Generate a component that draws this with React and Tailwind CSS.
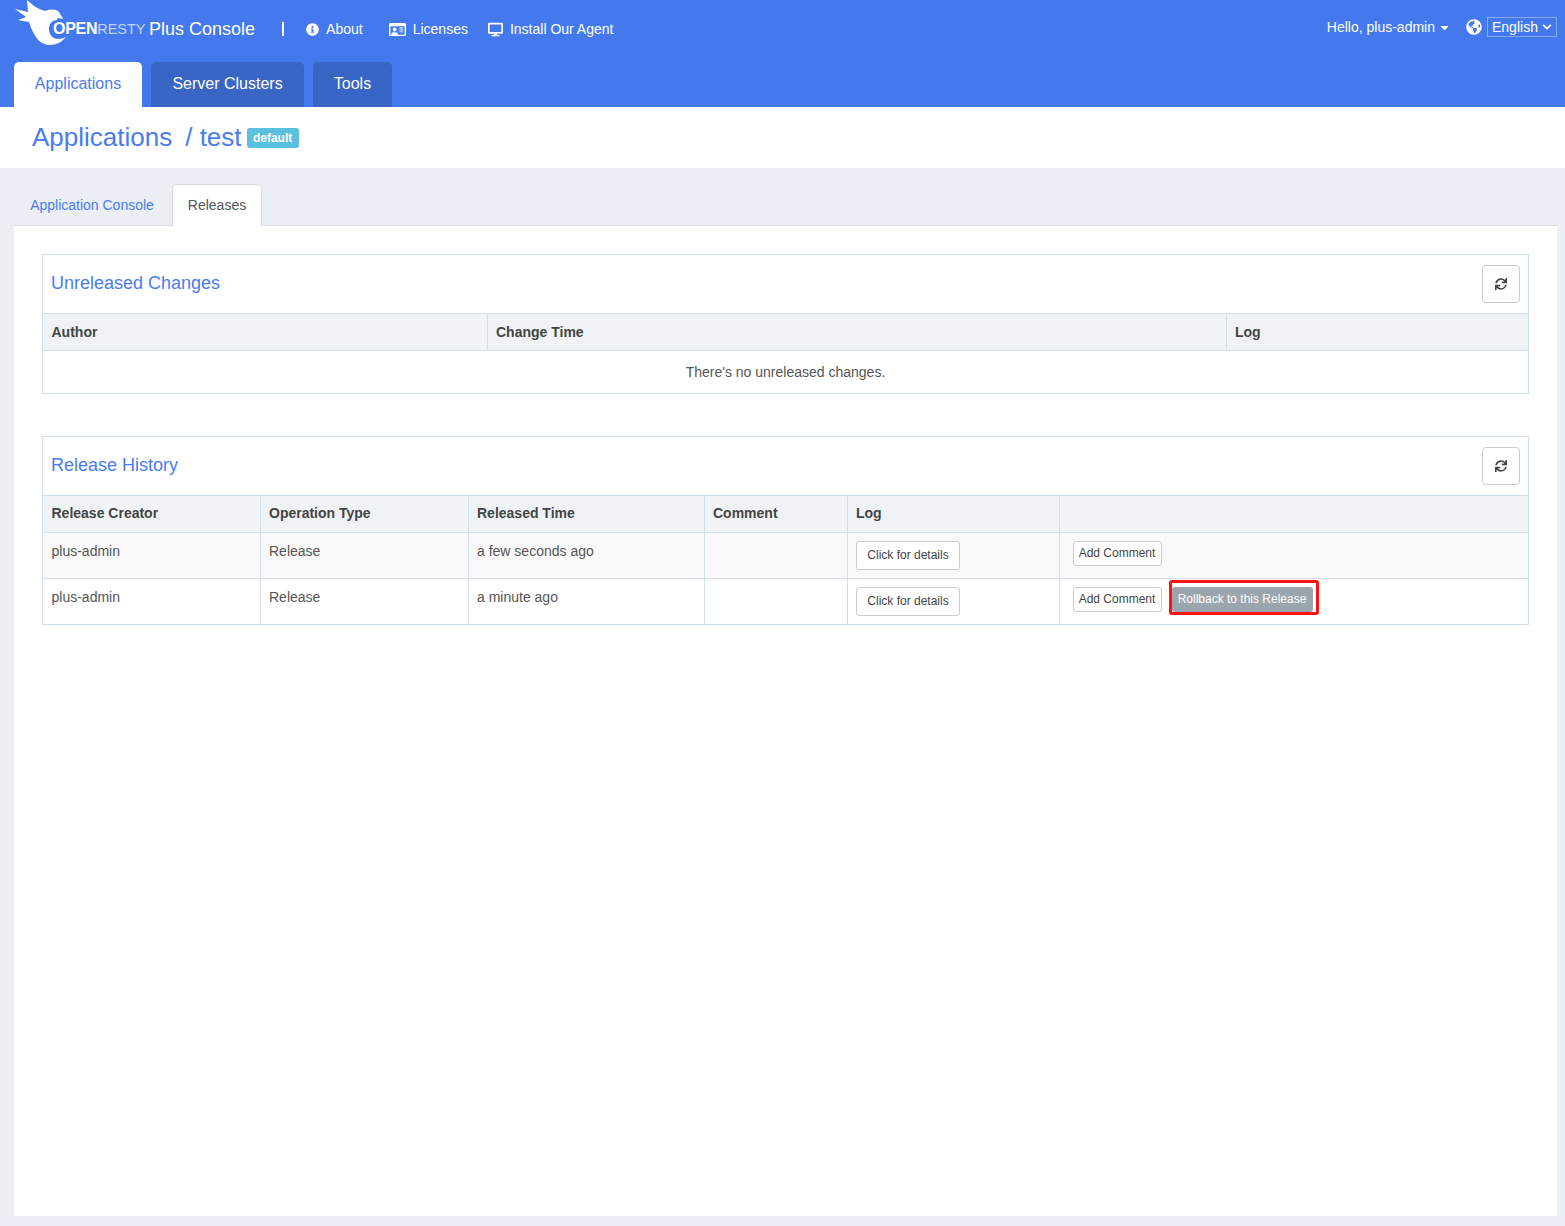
import React from "react";
import { FaInfoCircle, FaRegIdCard, FaDesktop, FaGlobeAmericas, FaSync, FaCaretDown, FaChevronDown } from "react-icons/fa";

const Logo = () => (
  <div className="relative w-[145px] h-[50px] -ml-[14px] shrink-0">
    <svg width="70" height="50" viewBox="0 0 70 50" className="absolute left-0 top-0">
      <path fill="#fff" d="M27 0 C32 5 38 9 45 11 C50 9 56 9 59 12 C60 14 62 16 63 19 L58 18 C57 19 57 20 57 20 C52 20 49 24 49 29 C49 35 53 39 58 39 C61 39 64 38 66 37 C62 42 56 45 50 45 C42 45 37 40 33 32 C31 28 30 25 29 22 L18 20 L26 17 L15 9 L28 12 Z" />
    </svg>
    <span className="absolute left-[53px] top-[18px] text-[16px] leading-[22px] font-bold text-white tracking-[-0.3px] whitespace-nowrap">OPEN<span className="font-normal text-[14.5px] text-[#c3d4f9] tracking-[0px]">RESTY</span></span>
  </div>
);

const NavLink = ({ icon, label, className }) => (
  <a className={`flex items-center text-white text-[14px] whitespace-nowrap ${className}`}>
    {icon}
    {label}
  </a>
);

const Th = ({ children, className = "" }) => (
  <th className={`border border-[#d1dfea] bg-[#f0f3f6] pl-[8.5px] pr-2 h-[37px] text-left text-[14px] font-bold text-[#444] ${className}`}>{children}</th>
);

const Td = ({ children, className = "" }) => (
  <td className={`border border-[#d1dfea] pl-[8.5px] pr-2 pt-[2px] h-[46px] align-top text-[14px] text-[#555] ${className}`}>{children}</td>
);

const SmallBtn = ({ children, className = "" }) => (
  <button className={`bg-white border border-[#ccc] rounded-[3px] text-[12px] text-[#444] ${className}`}>{children}</button>
);

const PanelHead = ({ title }) => (
  <div className="h-[59px] flex items-center justify-between pl-2 pr-2 border-b border-[#d1dfea]">
    <h3 className="text-[18px] font-normal text-[#4a7cf0] -mt-[1px]">{title}</h3>
    <button className="w-[38px] h-[38px] bg-white border border-[#ccc] rounded-[4px] flex items-center justify-center text-[#444]">
      <FaSync className="text-[12px]" />
    </button>
  </div>
);

const HistoryRow = ({ time, rollback, striped }) => (
  <tr className={striped ? "bg-[#f9f9f9]" : "bg-white"}>
    <Td>
      <div className="pt-[6px] leading-[20px]">plus-admin</div>
    </Td>
    <Td>
      <div className="pt-[6px] leading-[20px]">Release</div>
    </Td>
    <Td>
      <div className="pt-[6px] leading-[20px]">{time}</div>
    </Td>
    <Td></Td>
    <Td>
      <SmallBtn className="mt-[6px] w-[104px] h-[29px] block -ml-[0.5px] pl-[1px]">Click for details</SmallBtn>
    </Td>
    <td className="border border-[#d1dfea] pl-[13px] align-top">
      <div className="flex items-start">
        <SmallBtn className="mt-[8px] w-[89px] h-[25px]">Add Comment</SmallBtn>
        {rollback && (
          <div className="ml-[7px] mt-[1px] w-[150px] h-[35px] border-[3px] border-[#ff1212] rounded-[3px] flex items-start pt-[4px]">
            <button className="w-[141px] h-[25px] rounded-[3px] bg-[#9ba5ad] text-white text-[12px]">Rollback to this Release</button>
          </div>
        )}
      </div>
    </td>
  </tr>
);

export default function App() {
  return (
    <div className="min-h-[1226px] bg-[#ebeef5] flex flex-col font-['Liberation_Sans',Arial,sans-serif] text-[14px]">
      <header className="h-[107px] bg-[#4479ee] flex flex-col">
        <div className="h-[62px] flex pl-[14px] pr-[8px]">
          <Logo />
          <div className="flex items-start flex-1">
            <span className="text-white text-[18px] leading-[22px] mt-[18px] whitespace-nowrap ml-[4px]">Plus Console</span>
            <span className="w-[2px] h-[14px] bg-white ml-[27px] mt-[22px]" />
            <NavLink className="ml-[22px] mt-[19px] h-[20px]" label="About" icon={<FaInfoCircle className="text-[13px] mr-[7px]" />} />
            <NavLink className="ml-[26px] mt-[19px] h-[20px]" label="Licenses" icon={<FaRegIdCard className="text-[17px] mr-[7px]" />} />
            <NavLink className="ml-[20px] mt-[19px] h-[20px]" label="Install Our Agent" icon={<FaDesktop className="text-[15px] mr-[7px]" />} />
            <div className="ml-auto flex items-start">
              <span className="text-white text-[14px] mt-[17px] h-[20px] flex items-center whitespace-nowrap">
                Hello, plus-admin
                <FaCaretDown className="text-[13px] ml-[3px]" />
              </span>
              <FaGlobeAmericas className="text-white text-[16px] ml-[15px] mt-[19px]" />
              <div className="ml-[5px] mt-[17px] w-[70px] h-[20px] border border-[#8aa9f4] flex items-center justify-between pl-[4px] pr-[4px] text-white text-[14px]">
                English
                <FaChevronDown className="text-[10px]" />
              </div>
            </div>
          </div>
        </div>
        <nav className="h-[45px] flex pl-[14px] gap-[9px] text-[16px]">
          <a className="w-[128px] h-[45px] pb-[2px] bg-white rounded-t-[5px] flex items-center justify-center text-[#4a7cf0]">Applications</a>
          <a className="w-[153px] h-[45px] pb-[2px] bg-[#3965c5] rounded-t-[5px] flex items-center justify-center text-white">Server Clusters</a>
          <a className="w-[79px] h-[45px] pb-[2px] bg-[#3965c5] rounded-t-[5px] flex items-center justify-center text-white">Tools</a>
        </nav>
      </header>

      <div className="h-[61px] bg-white flex items-center pl-[32px] pb-[1px]">
        <h1 className="text-[26px] font-normal text-[#4a7cf0] whitespace-nowrap">Applications</h1>
        <span className="text-[26px] text-[#4a7cf0] ml-[13px] whitespace-nowrap">/ test</span>
        <span className="ml-[5px] mt-[1px] h-[20px] w-[52px] rounded-[3px] bg-[#5bc0de] text-white text-[12px] font-bold flex items-center justify-center">default</span>
      </div>

      <div className="flex-1 pt-[16px] pb-[10px] pl-[14px] pr-[8px] flex flex-col">
        <div className="h-[41px] flex items-end">
          <a className="w-[156px] h-[41px] pt-[1px] flex items-center justify-center text-[#4a7cf0] text-[14px]">Application Console</a>
          <a className="relative z-10 -mb-px ml-[2px] w-[90px] h-[42px] pb-[1px] bg-white border border-[#d8dde6] border-b-0 rounded-t-[5px] flex items-center justify-center text-[#555] text-[14px]">Releases</a>
        </div>
        <main className="flex-1 bg-white border-t border-[#d8dde6] pt-[28px] px-[28px]">
          <section className="border border-[#d1dfea]">
            <PanelHead title="Unreleased Changes" />
            <table className="w-full table-fixed border-collapse -mt-px">
              <colgroup>
                <col className="w-[444px]" />
                <col className="w-[739px]" />
                <col />
              </colgroup>
              <thead>
                <tr>
                  <Th className="border-l-0">Author</Th>
                  <Th>Change Time</Th>
                  <Th className="border-r-0">Log</Th>
                </tr>
              </thead>
              <tbody>
                <tr>
                  <td colSpan={3} className="h-[42px] pt-[2px] text-center text-[14px] text-[#555]">There's no unreleased changes.</td>
                </tr>
              </tbody>
            </table>
          </section>

          <section className="mt-[42px] border border-[#d1dfea] border-b-0">
            <PanelHead title="Release History" />
            <table className="w-full table-fixed border-collapse -mt-px [&_tr>*:first-child]:border-l-0 [&_tr>*:last-child]:border-r-0">
              <colgroup>
                <col className="w-[217px]" />
                <col className="w-[208px]" />
                <col className="w-[236px]" />
                <col className="w-[143px]" />
                <col className="w-[212px]" />
                <col />
              </colgroup>
              <thead>
                <tr>
                  <Th>Release Creator</Th>
                  <Th>Operation Type</Th>
                  <Th>Released Time</Th>
                  <Th>Comment</Th>
                  <Th>Log</Th>
                  <Th></Th>
                </tr>
              </thead>
              <tbody>
                <HistoryRow time="a few seconds ago" striped />
                <HistoryRow time="a minute ago" rollback />
              </tbody>
            </table>
          </section>
        </main>
      </div>
    </div>
  );
}
